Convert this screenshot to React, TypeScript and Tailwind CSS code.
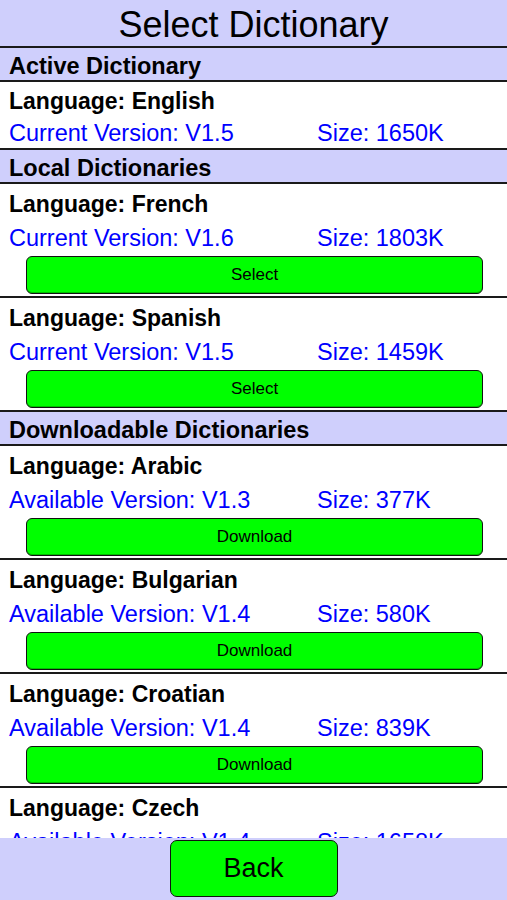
import React from "react";

type Dict = {
  language: string;
  version: string;
  size: string;
};

const active: Dict = { language: "English", version: "V1.5", size: "1650K" };

const local: Dict[] = [
  { language: "French", version: "V1.6", size: "1803K" },
  { language: "Spanish", version: "V1.5", size: "1459K" },
];

const downloadable: Dict[] = [
  { language: "Arabic", version: "V1.3", size: "377K" },
  { language: "Bulgarian", version: "V1.4", size: "580K" },
  { language: "Croatian", version: "V1.4", size: "839K" },
  { language: "Czech", version: "V1.4", size: "1658K" },
];

const font = { fontFamily: '"Liberation Sans", Arial, Helvetica, sans-serif' };

const SectionHeader = ({ title }: { title: string }) => (
  <div className="h-[34px] shrink-0 bg-[#cfcffc] border-b-2 border-[#1a1a1a] pl-[9px] pt-[5px] flex items-center">
    <span className="text-[23.5px] font-bold text-black leading-none">{title}</span>
  </div>
);

const DictRow = ({
  dict,
  label,
  action,
}: {
  dict: Dict;
  label: string;
  action?: string;
}) => (
  <div className="shrink-0 bg-white border-b-2 border-[#1a1a1a]">
    <div className={`${action ? "h-[36px]" : "h-[34px]"} pl-[9px] pt-[5px] flex items-center`}>
      <span className="text-[23px] font-bold text-black leading-none">Language: {dict.language}</span>
    </div>
    <div className={`${action ? "h-[34px]" : "h-[32px]"} pl-[9px] pt-[3px] flex items-center text-[23.5px] text-[#0000ff] leading-none`}>
      <span className="w-[308px]">
        {label} Version: {dict.version}
      </span>
      <span>Size: {dict.size}</span>
    </div>
    {action && (
      <button className="mt-[2px] mb-[2px] ml-[26px] mr-[24px] w-[457px] h-[38px] rounded-[6px] border border-[#111] bg-[#00ff00] text-[17px] text-black flex items-center justify-center shadow-[inset_0_-1px_0_rgba(0,0,0,0.25)]">
        {action}
      </button>
    )}
  </div>
);

export default function App() {
  return (
    <div className="w-[507px] h-[900px] flex flex-col bg-white overflow-hidden" style={font}>
      <div className="h-[48px] shrink-0 bg-[#cfcffc] border-b-2 border-[#1a1a1a] pt-[3px] flex items-center justify-center">
        <h1 className="text-[36px] text-black leading-none">Select Dictionary</h1>
      </div>

      <div className="flex-1 min-h-0 overflow-hidden flex flex-col">
        <SectionHeader title="Active Dictionary" />
        <DictRow dict={active} label="Current" />

        <SectionHeader title="Local Dictionaries" />
        {local.map((d) => (
          <DictRow key={d.language} dict={d} label="Current" action="Select" />
        ))}

        <SectionHeader title="Downloadable Dictionaries" />
        {downloadable.map((d) => (
          <DictRow key={d.language} dict={d} label="Available" action="Download" />
        ))}
      </div>

      <div className="h-[62px] shrink-0 bg-[#cfcffc] flex justify-center pt-[2px]">
        <button className="w-[168px] h-[57px] rounded-[7px] border border-[#111] bg-[#00ff00] text-[27px] text-black flex items-center justify-center">
          Back
        </button>
      </div>
    </div>
  );
}
